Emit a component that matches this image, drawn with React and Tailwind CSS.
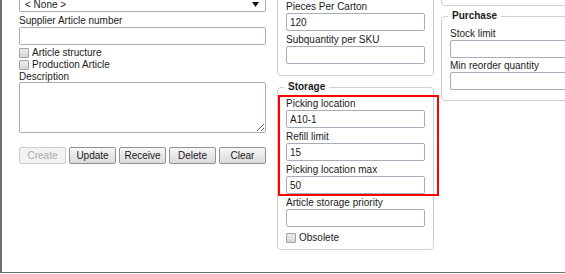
const inputCls =
  'block h-[18px] w-full rounded-[2px] border border-[#a7aebb] bg-white px-[3px] text-[10px] text-[#1b1b1b] outline-none';

function Label({ children, className = '' }) {
  return <div className={`h-[12px] whitespace-nowrap text-[10px] leading-[12px] ${className}`}>{children}</div>;
}

function Field({ value = '' }) {
  return <input readOnly defaultValue={value} className={inputCls} />;
}

function Check({ label, className = '' }) {
  return (
    <div className={`flex h-[12px] items-center gap-[3px] ${className}`}>
      <span className="block h-[10px] w-[10px] rounded-[1px] border border-[#a2a2a2] bg-linear-to-b from-[#ececec] to-[#d6d6d6]" />
      <span className="text-[10px] leading-[12px]">{label}</span>
    </div>
  );
}

function Legend({ children }) {
  return <legend className="ml-[-2px] px-[4px] text-[10px] font-bold leading-[12px]">{children}</legend>;
}

function Btn({ children, disabled }) {
  return (
    <button
      disabled={disabled}
      className={`h-[17px] flex-1 rounded-[2px] border text-[10px] leading-none ${
        disabled
          ? 'border-[#cbcdd1] bg-[#f3f3f3] text-[#a9a9a9]'
          : 'border-[#8e9197] bg-linear-to-b from-[#f7f7f7] to-[#dadada] text-[#1b1b1b]'
      }`}
    >
      {children}
    </button>
  );
}

export default function App() {
  return (
    <div className="h-[274px] w-[565px] overflow-hidden bg-white font-['Liberation_Sans',Arial,sans-serif] text-[#1b1b1b]">
      <div className="relative flex h-[273px] items-start border-b border-l-2 border-[#6f6f6f] pl-[17px]">
        {/* left column */}
        <div className="flex w-[247px] shrink-0 flex-col">
          <div className="-mt-[4px] flex h-[16px] items-start justify-between rounded-[2px] border border-[#a7aebb] pl-[5px] pr-[6px] pt-[3px]">
            <span className="text-[10px] leading-[10px]">&lt; None &gt;</span>
            <svg width="7" height="5" viewBox="0 0 7 5" className="mt-[2px]">
              <path d="M0 0h7L3.5 5z" fill="#111" />
            </svg>
          </div>
          <Label className="mt-[3px]">Supplier Article number</Label>
          <Field />
          <Check label="Article structure" className="mt-[2px]" />
          <Check label="Production Article" />
          <div className="h-[11px] text-[10px] leading-[11px]">Description</div>
          <textarea readOnly className="block h-[51px] w-full rounded-[2px] border border-[#a7aebb] outline-none" />
          <div className="mt-[14px] flex gap-[3px]">
            <Btn disabled>Create</Btn>
            <Btn>Update</Btn>
            <Btn>Receive</Btn>
            <Btn>Delete</Btn>
            <Btn>Clear</Btn>
          </div>
        </div>

        {/* middle column */}
        <div className="ml-[11px] flex w-[157px] shrink-0 flex-col">
          <div className="-mt-[10px] rounded-[4px] border border-[#cfcfcf] px-[8px] pb-[11px] pt-[10px]">
            <Label>Pieces Per Carton</Label>
            <Field value="120" />
            <Label className="mt-[3px]">Subquantity per SKU</Label>
            <Field />
          </div>
          <fieldset className="mt-[5px] rounded-[4px] border border-[#cfcfcf] px-[8px] pb-[5px] pt-[5px]">
            <Legend>Storage</Legend>
            <Label>Picking location</Label>
            <Field value="A10-1" />
            <Label className="mt-[3px]">Refill limit</Label>
            <Field value="15" />
            <Label className="mt-[3px]">Picking location max</Label>
            <Field value="50" />
            <Label className="mt-[3px]">Article storage priority</Label>
            <Field />
            <Check label="Obsolete" className="mt-[5px]" />
          </fieldset>
        </div>

        {/* right column */}
        <div className="ml-[7px] flex w-[200px] shrink-0 flex-col">
          <div className="-mt-[20px] h-[26px] rounded-[4px] border border-[#cfcfcf]" />
          <fieldset className="mt-[4px] rounded-[4px] border border-[#cfcfcf] px-[8px] pb-[10px] pt-[6px]">
            <Legend>Purchase</Legend>
            <Label>Stock limit</Label>
            <Field />
            <Label className="mt-[2px]">Min reorder quantity</Label>
            <Field />
          </fieldset>
        </div>

        {/* highlight */}
        <div className="absolute left-[276px] top-[95px] h-[101px] w-[161px] border-2 border-[#ff0000]" />
      </div>
    </div>
  );
}
